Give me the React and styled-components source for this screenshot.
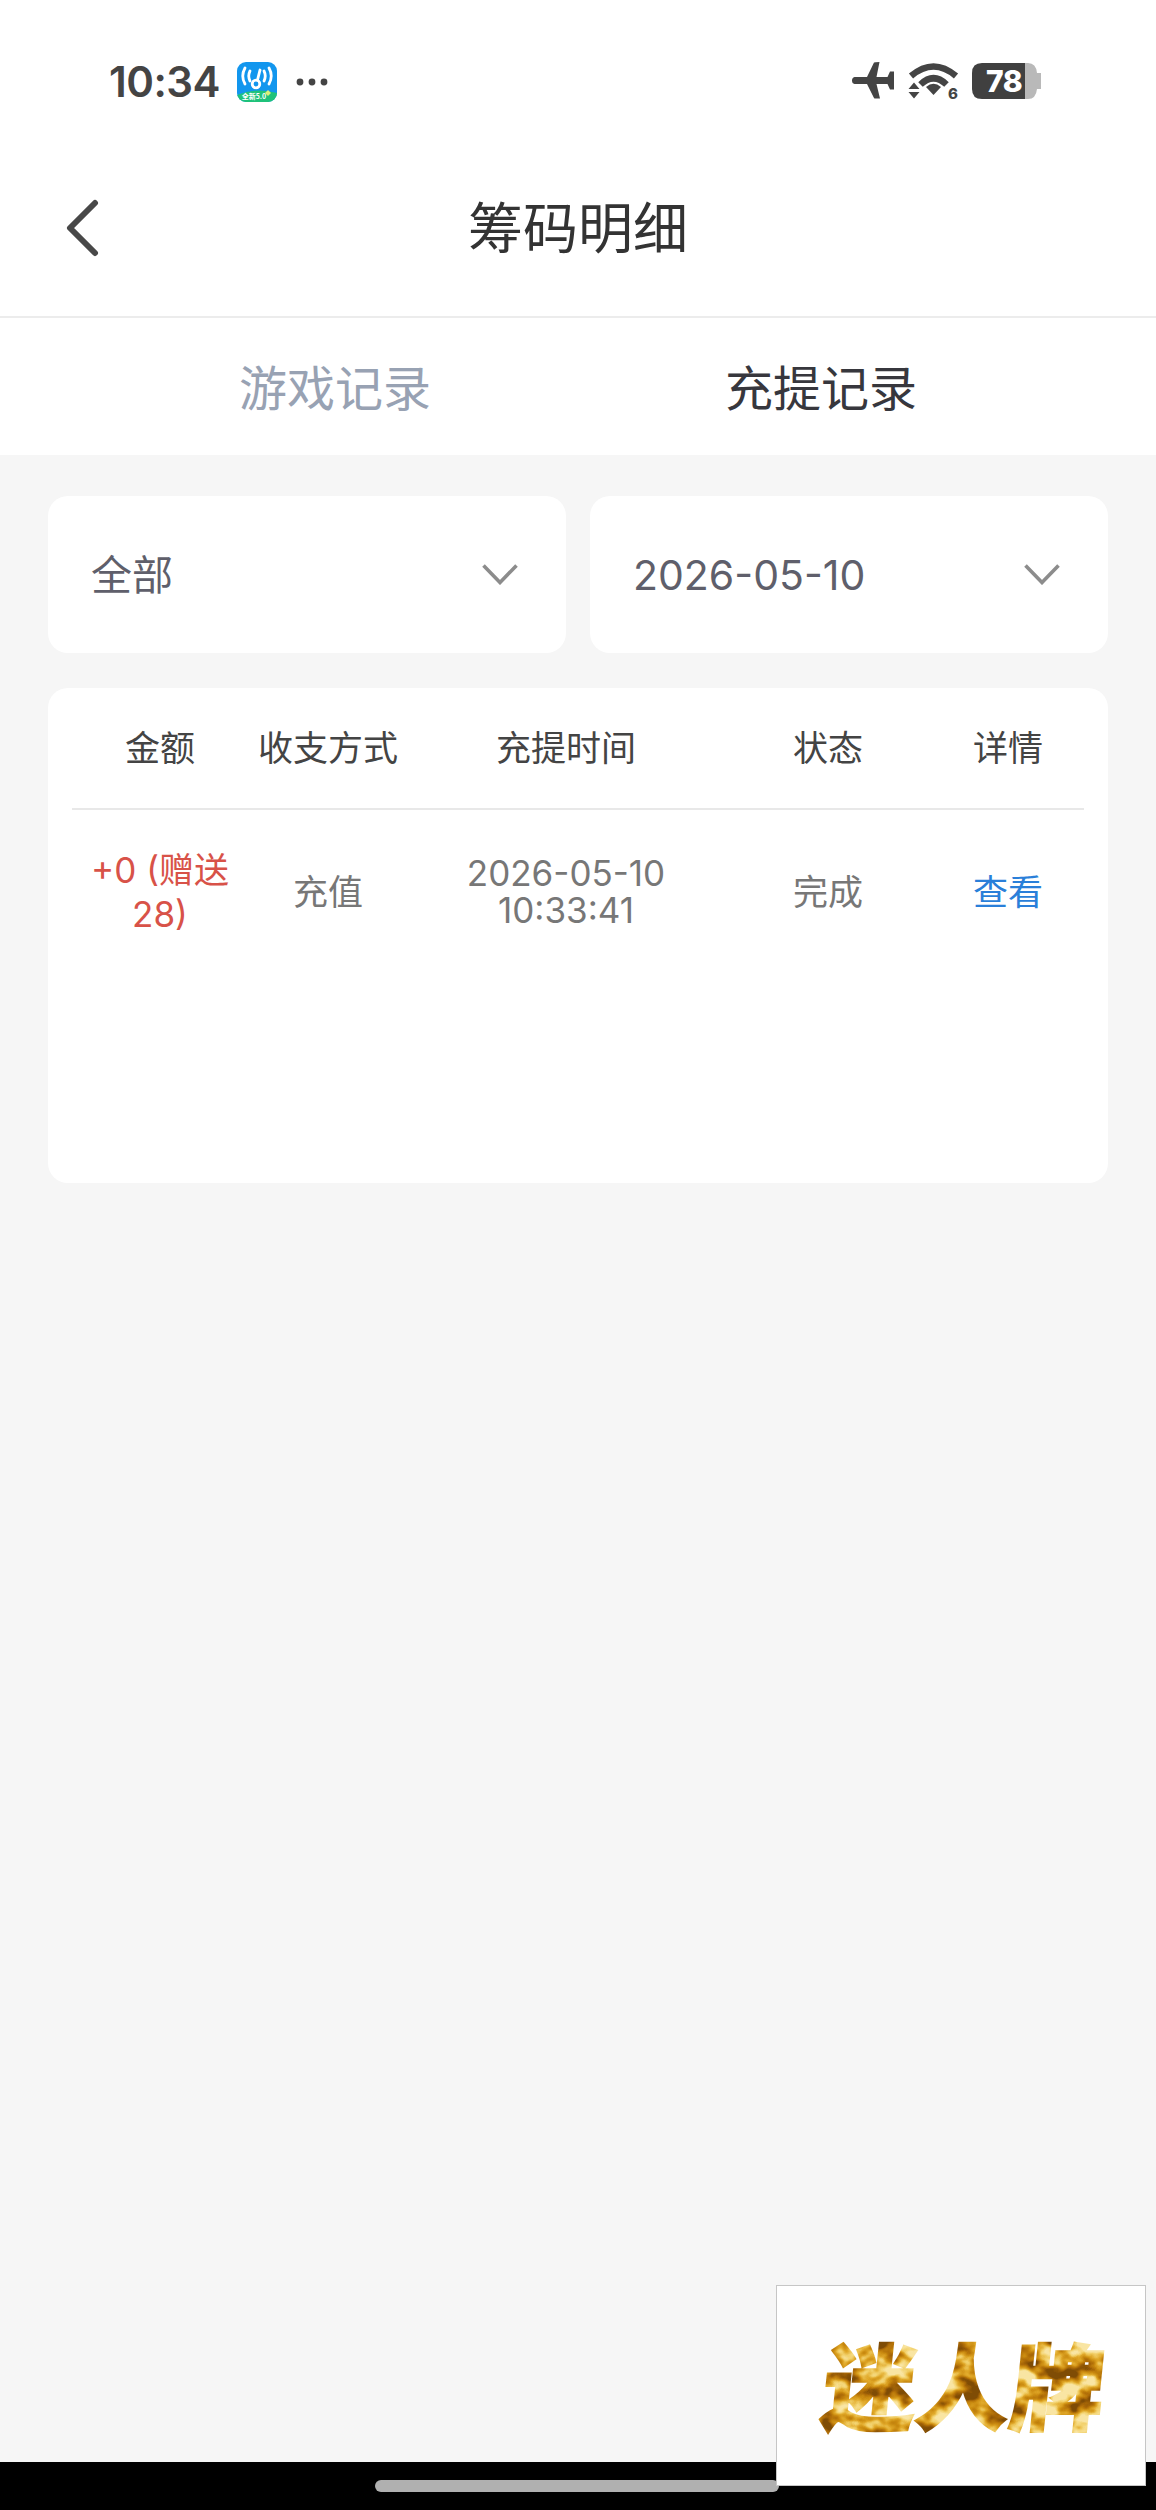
import React from "react";
import styled, { createGlobalStyle } from "styled-components";

const GlobalStyle = createGlobalStyle`
  html, body {
    margin: 0;
    padding: 0;
    background: #f6f6f6;
  }
  * {
    box-sizing: border-box;
  }
`;

const FONT = `Inter, "Noto Sans CJK SC", sans-serif`;

const Page = styled.div`
  position: relative;
  width: 1156px;
  height: 2510px;
  display: flex;
  flex-direction: column;
  overflow: hidden;
  background: #f6f6f6;
  font-family: ${FONT};
`;

const StatusBar = styled.div`
  height: 140px;
  padding: 62px 115px 0 109px;
  display: flex;
  justify-content: space-between;
  align-items: flex-start;
  background: #fff;
`;

const StatusLeft = styled.div`
  display: flex;
  align-items: center;
  height: 39px;
`;

const Clock = styled.span`
  font-size: 42px;
  font-weight: 600;
  line-height: 39px;
  color: #444;
  letter-spacing: -0.5px;
`;

const AppIcon = styled.svg`
  width: 40px;
  height: 40px;
  margin-left: 17px;
`;

const MoreDots = styled.svg`
  width: 32px;
  height: 8px;
  margin-left: 19px;
`;

const StatusRight = styled.div`
  display: flex;
  align-items: center;
  height: 37px;
  gap: 14px;
`;

const Battery = styled.div`
  position: relative;
  width: 69px;
  height: 36px;
  display: flex;
  align-items: center;
`;

const BatteryShell = styled.svg`
  position: absolute;
  inset: 0;
`;

const BatteryLevel = styled.span`
  position: relative;
  width: 64px;
  text-align: center;
  font-size: 30px;
  line-height: 36px;
  font-weight: 800;
  letter-spacing: -0.5px;
  color: #fff;
`;

const NavBar = styled.header`
  position: relative;
  height: 178px;
  padding-bottom: 8px;
  display: flex;
  align-items: center;
  justify-content: center;
  background: #fff;
  border-bottom: 2px solid #ececec;
`;

const BackIcon = styled.svg`
  position: absolute;
  left: 64px;
  top: 58px;
  width: 36px;
  height: 60px;
`;

const Title = styled.h1`
  margin: 0;
  font-size: 55px;
  font-weight: 400;
  color: #333;
`;

const Tabs = styled.nav`
  height: 137px;
  padding: 0 92px 4px;
  display: grid;
  grid-template-columns: 1fr 1fr;
  align-items: center;
  background: #fff;
`;

const Tab = styled.div`
  text-align: center;
  font-size: 48px;
  font-weight: 400;
  color: ${({ $active }) => ($active ? "#37373d" : "#98a2b3")};
`;

const Content = styled.main`
  padding: 41px 48px 0;
  display: flex;
  flex-direction: column;
  gap: 35px;
`;

const Filters = styled.div`
  display: grid;
  grid-template-columns: 1fr 1fr;
  gap: 24px;
`;

const Select = styled.div`
  height: 157px;
  padding: 0 48px 0 43px;
  display: flex;
  align-items: center;
  justify-content: space-between;
  background: #fff;
  border-radius: 20px;
`;

const SelectValue = styled.span`
  padding-bottom: ${({ $cjk }) => ($cjk ? "6px" : "0")};
  font-size: 41px;
  color: #5f5f6b;
`;

const Chevron = styled.svg`
  width: 36px;
  height: 21px;
`;

const Card = styled.section`
  height: 495px;
  padding: 0 24px;
  background: #fff;
  border-radius: 20px;
`;

const Row = styled.div`
  display: grid;
  grid-template-columns: 176px 160px 316px 208px 152px;
  align-items: center;
  height: ${({ $head }) => ($head ? "122px" : "164px")};
  border-bottom: ${({ $head }) => ($head ? "2px solid #e8e8e8" : "none")};
`;

const Cell = styled.div`
  padding: 0 10px;
  text-align: center;
  font-size: 35px;
  line-height: ${({ $lh }) => $lh || 44}px;
  color: ${({ $color }) => $color || "#777"};
`;

const HomeBar = styled.div`
  margin-top: auto;
  height: 48px;
  padding: 18px 0 0 375px;
  background: #000;
`;

const HomePill = styled.div`
  width: 404px;
  height: 12px;
  border-radius: 6px;
  background: #b0b0b0;
`;

const Watermark = styled.div`
  position: absolute;
  left: 776px;
  top: 2285px;
  width: 370px;
  height: 201px;
  display: flex;
  align-items: center;
  justify-content: center;
  background: #fff;
  border: 1px solid #c6c6c6;
`;

const WifiKeyIcon = () => (
  <AppIcon viewBox="0 0 40 40">
    <defs>
      <clipPath id="app-corner">
        <rect width="40" height="40" rx="9" />
      </clipPath>
    </defs>
    <g clipPath="url(#app-corner)">
      <rect width="40" height="40" fill="#1296ee" />
      <path d="M0 33 Q20 25 40 31 V40 H0 Z" fill="#1fc27a" />
      <g fill="none" stroke="#fff" strokeWidth="2.8" strokeLinecap="round">
        <path d="M8 6 Q3.5 14 8 22" />
        <path d="M13 9 Q10.5 14 13 19" />
        <path d="M32 6 Q36.5 14 32 22" />
        <path d="M27 9 Q29.5 14 27 19" />
        <path d="M23 8 L20.5 18" />
        <circle cx="19" cy="22" r="3.8" />
      </g>
      <path d="M28 31 l3 -3 l3 3 l-3 3 Z" fill="#d9ef7a" />
      <text x="17" y="37" textAnchor="middle" fontSize="7" fontWeight="700" fill="#fff" fontFamily={`"Noto Sans CJK SC", sans-serif`}>
        全新5.0
      </text>
    </g>
  </AppIcon>
);

const PlaneIcon = () => (
  <svg width="43" height="37" viewBox="0 0 43 37">
    <path
      d="M2.5 15 H15 L22 .5 Q22.5 0 27.5 0 L24.5 15 H35.5 L38 9.5 H42 V27.5 H38 L35.5 22 H24.5 L28 36.5 H23 Q22.5 36.5 22 36 L15 22 H2.5 Q0 21.5 0 18.5 Q0 15.5 2.5 15 Z"
      fill="#444"
    />
  </svg>
);

const WifiIcon = () => (
  <svg width="49" height="37" viewBox="0 0 49 37" overflow="visible">
    <g fill="none" stroke="#444" strokeWidth="6.5">
      <path d="M2 14 Q24.5 -5 47 14" />
      <path d="M11.5 22.5 Q24.5 10 37.5 22.5" />
    </g>
    <path d="M17 25 Q24.5 18.5 32 25 L24.5 33 Z" fill="#444" />
    <path d="M5 20.5 L10.5 27 H-.5 Z M-.5 30 H10.5 L5 36.5 Z" fill="#444" />
    <text x="39" y="37" fontSize="15" fontWeight="800" fill="#444" fontFamily="Inter, sans-serif">
      6
    </text>
  </svg>
);

// gold foil look: stretched noise mapped onto a gold ramp, kept inside the glyphs
const GoldLogo = () => (
  <svg width="350" height="170" viewBox="0 0 350 170">
    <defs>
      <filter id="gold-foil" x="0" y="0" width="100%" height="100%" colorInterpolationFilters="sRGB">
        <feTurbulence type="fractalNoise" baseFrequency="0.035 0.05" numOctaves="3" seed="7" result="noise" />
        <feColorMatrix
          in="noise"
          type="matrix"
          values="2.8 0 0 0 -0.85  2.8 0 0 0 -0.85  2.8 0 0 0 -0.85  0 0 0 0 1"
          result="gray"
        />
        <feComponentTransfer in="gray" result="foil">
          <feFuncR type="table" tableValues="0.5 0.68 0.79 0.88 0.95 0.98" />
          <feFuncG type="table" tableValues="0.3 0.42 0.54 0.66 0.82 0.9" />
          <feFuncB type="table" tableValues="0.02 0.03 0.06 0.16 0.42 0.64" />
        </feComponentTransfer>
        <feComposite in="foil" in2="SourceAlpha" operator="in" />
      </filter>
    </defs>
    <g filter="url(#gold-foil)">
      <text
        x="175"
        y="122"
        textAnchor="middle"
        fontSize="94"
        fontWeight="900"
        fill="#000"
        stroke="#000"
        strokeWidth="2"
        transform="skewX(-6) translate(12 0)"
        fontFamily={`"Noto Sans CJK SC", sans-serif`}
      >
        迷人牌
      </text>
    </g>
  </svg>
);

const App = () => (
  <Page>
    <GlobalStyle />
    <StatusBar>
      <StatusLeft>
        <Clock>10:34</Clock>
        <WifiKeyIcon />
        <MoreDots viewBox="0 0 32 8">
          <circle cx="4" cy="4" r="3.4" fill="#444" />
          <circle cx="16" cy="4" r="3.4" fill="#444" />
          <circle cx="28" cy="4" r="3.4" fill="#444" />
        </MoreDots>
      </StatusLeft>
      <StatusRight>
        <PlaneIcon />
        <WifiIcon />
        <Battery>
          <BatteryShell width="69" height="36" viewBox="0 0 69 36">
            <path d="M50 0 H56 Q64 0 65 10 H69 V26 H65 Q64 36 56 36 H50 Z" fill="#b9b9b9" />
            <path d="M10 0 H53 V36 H10 Q0 36 0 26 V10 Q0 0 10 0 Z" fill="#404040" />
          </BatteryShell>
          <BatteryLevel>78</BatteryLevel>
        </Battery>
      </StatusRight>
    </StatusBar>

    <NavBar>
      <BackIcon viewBox="0 0 36 60" fill="none" stroke="#484848" strokeWidth="6" strokeLinecap="round" strokeLinejoin="round">
        <path d="M31 5 L6 30 L31 55" />
      </BackIcon>
      <Title>筹码明细</Title>
    </NavBar>

    <Tabs>
      <Tab>游戏记录</Tab>
      <Tab $active>充提记录</Tab>
    </Tabs>

    <Content>
      <Filters>
        <Select>
          <SelectValue $cjk>全部</SelectValue>
          <Chevron viewBox="0 0 36 21" fill="none" stroke="#8c8c8c" strokeWidth="3.6">
            <path d="M1.5 1.5 L18 18.5 L34.5 1.5" />
          </Chevron>
        </Select>
        <Select>
          <SelectValue>2026-05-10</SelectValue>
          <Chevron viewBox="0 0 36 21" fill="none" stroke="#8c8c8c" strokeWidth="3.6">
            <path d="M1.5 1.5 L18 18.5 L34.5 1.5" />
          </Chevron>
        </Select>
      </Filters>

      <Card>
        <Row $head>
          <Cell $color="#444">金额</Cell>
          <Cell $color="#444">收支方式</Cell>
          <Cell $color="#444">充提时间</Cell>
          <Cell $color="#444">状态</Cell>
          <Cell $color="#444">详情</Cell>
        </Row>
        <Row>
          <Cell $color="#d85248">+0 (赠送28)</Cell>
          <Cell>充值</Cell>
          <Cell $lh={37}>
            2026-05-10
            <br />
            10:33:41
          </Cell>
          <Cell>完成</Cell>
          <Cell $color="#2a7fd9">查看</Cell>
        </Row>
      </Card>
    </Content>

    <HomeBar>
      <HomePill />
    </HomeBar>

    <Watermark>
      <GoldLogo />
    </Watermark>
  </Page>
);

export default App;
